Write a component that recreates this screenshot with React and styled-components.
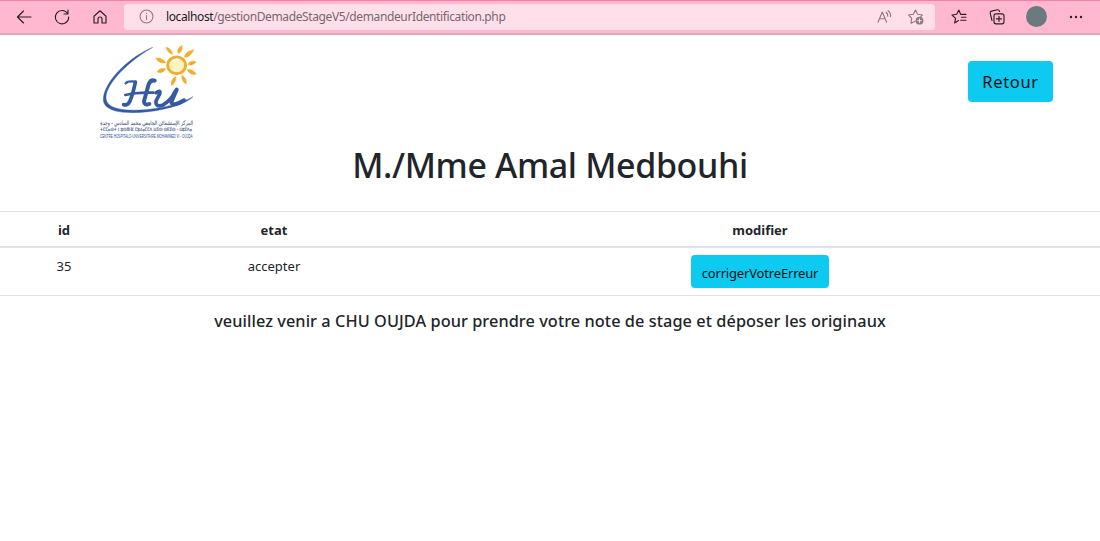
import React from "react";
import styled, { createGlobalStyle } from "styled-components";

const GlobalStyle = createGlobalStyle`
  * { box-sizing: border-box; }
  body { margin: 0; background: #fff; color: #212529; font-family: "Noto Sans", "Open Sans", sans-serif; }
`;

const Toolbar = styled.header`
  display: flex;
  align-items: center;
  height: 35px;
  padding: 0 0 1px 15px;
  background: #ffb8d0;
  border-top: 1px solid #f47fa8;
  border-bottom: 2px solid #d9a5b9;
`;

const NavGroup = styled.nav`
  display: flex;
  flex: none;
  gap: 20px;
  width: 109px;
`;

const IconButton = styled.button`
  display: flex;
  padding: 0;
  border: 0;
  background: none;
  color: ${(p) => (p.$muted ? "#8c7b82" : "#2b2024")};
`;

const AddressBar = styled.div`
  display: flex;
  flex: none;
  align-items: center;
  width: 811px;
  height: 26px;
  padding: 0 10px 0 14px;
  border-radius: 4px;
  background: #ffe0ea;
`;

const Url = styled.span`
  flex: 1;
  margin-left: 11px;
  font-size: 12px;
  line-height: 16px;
  letter-spacing: -0.38px;
  color: #75686d;
  white-space: nowrap;
`;

const Host = styled.span`
  color: #20191c;
`;

const AddressActions = styled.div`
  display: flex;
  gap: 14px;
`;

const BrowserActions = styled.div`
  display: flex;
  flex: none;
  align-items: center;
  margin-left: 15px;
`;

const ActionSlot = styled.div`
  display: flex;
  justify-content: center;
  width: ${(p) => p.$width}px;
`;

const Avatar = styled.span`
  width: 21px;
  height: 21px;
  border-radius: 50%;
  background: #6b7a7f;
`;

const Banner = styled.div`
  display: flex;
  justify-content: space-between;
  height: 110px;
  padding: 0 47px 0 85px;
`;

const Button = styled.button`
  display: flex;
  align-items: center;
  justify-content: center;
  width: ${(p) => (p.$large ? 85 : 138)}px;
  height: ${(p) => (p.$large ? 41 : 33)}px;
  margin: ${(p) => (p.$large ? "26px 0 0" : "0 auto")};
  padding: ${(p) => (p.$large ? "0" : "2px 0 0")};
  border: 0;
  border-radius: 4px;
  background: #0dcaf0;
  color: #041014;
  font-family: inherit;
  font-size: ${(p) => (p.$large ? 16.5 : 13)}px;
  letter-spacing: ${(p) => (p.$large ? "0.65px" : "-0.17px")};
  white-space: nowrap;
`;

const Title = styled.h1`
  margin: 0;
  height: 66px;
  font-size: 34px;
  font-weight: 500;
  line-height: 41px;
  letter-spacing: -0.36px;
  text-align: center;
`;

const Table = styled.table`
  width: 100%;
  table-layout: fixed;
  border-collapse: separate;
  border-spacing: 0;
  font-size: 13px;
  text-align: center;
`;

const Col = styled.col`
  width: ${(p) => p.$width}px;
`;

const HeadCell = styled.th`
  height: 37px;
  padding: 2px 0 0;
  border-top: 1px solid #dee2e6;
  border-bottom: 2px solid #dee2e6;
  font-weight: 700;
`;

const Cell = styled.td`
  height: 48px;
  padding: ${(p) => (p.$action ? "7px 0" : "9px 0 0")};
  border-bottom: 1px solid #dee2e6;
  vertical-align: top;
  line-height: 18px;
`;

const Notice = styled.p`
  margin: 13px 0 0;
  font-size: 16.3px;
  font-weight: 500;
  line-height: 24px;
  letter-spacing: 0.07px;
  text-align: center;
`;

const Icon = ({ children, size = 18 }) => (
  <svg width={size} height={size} viewBox="0 0 18 18" fill="none" stroke="currentColor" strokeWidth="1.15" strokeLinecap="round" strokeLinejoin="round">
    {children}
  </svg>
);

const LogoSvg = styled.svg`
  display: block;
  flex: none;
  overflow: visible;
`;

const rays = [
  "M263 58 Q247 55 243 36 Q261 41 263 58Z",
  "M280 56 Q295 49 291 31 Q272 42 280 56Z",
  "M298 67 Q315 68 327 44 Q300 48 298 67Z",
  "M308 88 Q322 96 334 81 Q318 73 308 88Z",
  "M306 104 Q315 122 334 118 Q325 101 306 104Z",
  "M290 120 Q289 140 304 148 Q307 129 290 120Z",
  "M272 124 Q256 133 259 152 Q276 141 272 124Z",
  "M243 83 Q230 65 212 70 Q222 88 243 83Z",
  "M242 101 Q224 97 216 111 Q233 118 242 101Z",
];

const Logo = () => (
  <LogoSvg width="130" height="115" viewBox="0 0 390 345" role="img" aria-label="CHU Oujda">
    <path d="M203 37 C135 65 60 136 55 190 C52 234 125 237 190 230 C253 223 305 204 324 185 C290 205 235 219 180 224 C115 229 62 222 63 187 C65 143 134 76 203 37Z" fill="#345b9f" stroke="#345b9f" strokeWidth="1.2" />
    <ellipse cx="275" cy="91" rx="27" ry="25" fill="#fff3c4" stroke="#f1ad2d" strokeWidth="9" />
    <path d="M263 79 Q272 71 281 73" fill="none" stroke="#fff" strokeWidth="4" />
    {rays.map((d) => <path key={d} d={d} fill="#f1ad2d" stroke="#f1ad2d" />)}
    <g fill="none" stroke="#345b9f" strokeLinecap="round" strokeLinejoin="round">
      <path d="M122 145 Q128 137 153 140" strokeWidth="7" />
      <path d="M151 142 Q144 177 134 200 Q127 213 116 209" strokeWidth="11" />
      <path d="M209 137 Q197 133 191 148 L177 199 Q177 213 193 207" strokeWidth="12" />
      <path d="M121 180 Q155 171 205 173" strokeWidth="8" />
      <path d="M213 173 Q228 163 224 177 L213 198 Q211 217 232 211 Q258 196 270 170" strokeWidth="11" />
      <path d="M275 164 L259 201 Q262 217 297 196" strokeWidth="12" />
    </g>
    <g fill="#43587f" textAnchor="middle">
      <text x="185" y="269" fontFamily="DejaVu Sans, sans-serif" fontSize="18" stroke="#43587f" strokeWidth="0.3" textLength="278" lengthAdjust="spacingAndGlyphs" direction="rtl">المركز الإستشفائي الجامعي محمد السادس - وجدة</text>
      <text x="183" y="289" fontFamily="DejaVu Sans, sans-serif" fontSize="13" stroke="#43587f" strokeWidth="0.4" textLength="276" lengthAdjust="spacingAndGlyphs">ⵜⵎⵎⴰⵙⵜ ⵏ ⵓⵙⴳⵏⴼ ⵎⵓⵃⴰⵎⵎⴷ ⵡⵉⵙ ⵙⴹⵉⵙ - ⵡⵓⵊⴷⴰ</text>
      <text x="184" y="308" fontFamily="Liberation Sans, Arial, sans-serif" fontSize="15" fill="#284c92" textLength="278" lengthAdjust="spacingAndGlyphs">CENTRE HOSPITALO-UNIVERSITAIRE MOHAMMED VI - OUJDA</text>
    </g>
  </LogoSvg>
);

export default function App() {
  return (
    <>
      <GlobalStyle />
      <Toolbar>
        <NavGroup>
          <IconButton aria-label="Back"><Icon><path d="M16 9H2.5M8.5 3L2.5 9l6 6" /></Icon></IconButton>
          <IconButton aria-label="Refresh"><Icon><path d="M14.6 5.5A6.7 6.7 0 1 0 15.7 9M15 2v4h-4" /></Icon></IconButton>
          <IconButton aria-label="Home"><Icon><path d="M3 8.2L9 2.8l6 5.4V15h-4v-4a2 2 0 0 0-4 0v4H3z" /></Icon></IconButton>
        </NavGroup>
        <AddressBar>
          <IconButton $muted aria-label="Site information">
            <Icon size={17}><circle cx="9" cy="9" r="6.8" /><path d="M9 8v4.3M9 5.6v.2" /></Icon>
          </IconButton>
          <Url><Host>localhost</Host>/gestionDemadeStageV5/demandeurIdentification.php</Url>
          <AddressActions>
            <IconButton $muted aria-label="Read aloud">
              <Icon><path d="M3 14.2L7.3 4l4.3 10.2M4.5 10.7h5.6M11 4.3q2 1.3 1.8 4M13 2.7q3 2 2.5 5.8" /></Icon>
            </IconButton>
            <IconButton $muted aria-label="Add favorite">
              <Icon><path d="M8.2 13.2L4 15.2l.7-4.9L1.6 7l4.7-.8L8.5 2l2.2 4.2 4.7.8-1.6 1.6" /><circle cx="12.5" cy="12.7" r="3.9" fill="currentColor" stroke="none" /><path d="M12.5 10.9v3.6M10.7 12.7h3.6" stroke="#ffe0ea" strokeWidth="1" /></Icon>
            </IconButton>
          </AddressActions>
        </AddressBar>
        <BrowserActions>
          <ActionSlot $width={18}><IconButton aria-label="Favorites"><Icon><path d="M8.5 12.5L4.6 15l1-4.7L2 7l4.7-.7L8.8 2l1.8 4.3H16M11.5 9.2H16M10.7 12.2H16" /></Icon></IconButton></ActionSlot>
          <ActionSlot $width={58}><IconButton aria-label="Collections"><Icon><rect x="6" y="5.8" width="10" height="10" rx="2" /><path d="M11 8.2v5.2M8.4 10.8h5.2M4 12.5L2.2 5.3q-.3-1.7 1.4-2.2l5.8-1.3q1.6-.2 2.2 1.7" /></Icon></IconButton></ActionSlot>
          <ActionSlot $width={21}><Avatar /></ActionSlot>
          <ActionSlot $width={58}><IconButton aria-label="More"><Icon><g fill="currentColor" stroke="none"><circle cx="4" cy="9" r="1.2" /><circle cx="9" cy="9" r="1.2" /><circle cx="14" cy="9" r="1.2" /></g></Icon></IconButton></ActionSlot>
        </BrowserActions>
      </Toolbar>
      <main>
        <Banner><Logo /><Button $large>Retour</Button></Banner>
        <Title>M./Mme Amal Medbouhi</Title>
        <Table>
          <colgroup><Col $width={128} /><Col $width={292} /><Col $width={680} /></colgroup>
          <thead><tr><HeadCell>id</HeadCell><HeadCell>etat</HeadCell><HeadCell>modifier</HeadCell></tr></thead>
          <tbody><tr><Cell>35</Cell><Cell>accepter</Cell><Cell $action><Button>corrigerVotreErreur</Button></Cell></tr></tbody>
        </Table>
        <Notice>veuillez venir a CHU OUJDA pour prendre votre note de stage et déposer les originaux</Notice>
      </main>
    </>
  );
}
